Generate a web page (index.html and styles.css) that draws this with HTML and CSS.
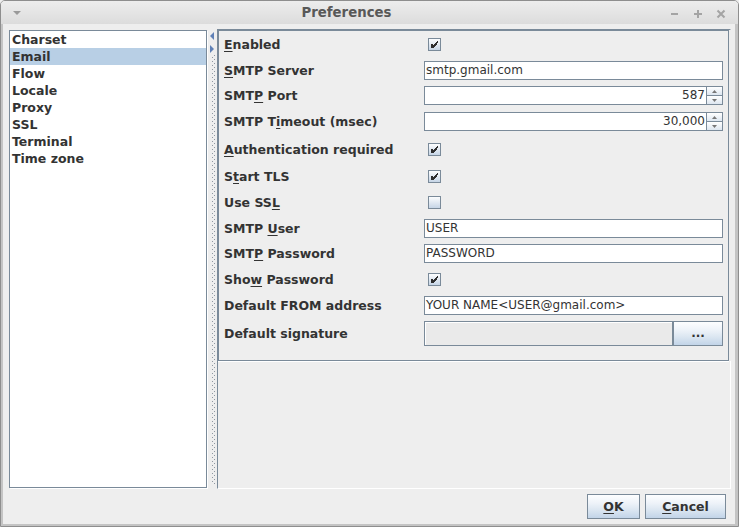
FILE: index.html
```html
<!DOCTYPE html>
<html>
<head>
<meta charset="utf-8">
<title>Preferences</title>
<link rel="stylesheet" href="styles.css">
</head>
<body>
<div class="window">
  <div class="titlebar">
    <div class="tb-left">
      <svg width="29" height="23" viewBox="0 0 29 23"><polygon points="12,10 20,10 16,14" fill="#9a9a9a"/></svg>
    </div>
    <div class="tb-title">Preferences</div>
    <div class="tb-right">
      <svg width="75" height="23" viewBox="0 0 75 23" shape-rendering="crispEdges">
        <rect x="8" y="12" width="7" height="2" fill="#a4a4a4"/>
        <rect x="31" y="12" width="8" height="2" fill="#a4a4a4"/>
        <rect x="34" y="9" width="2" height="8" fill="#a4a4a4"/>
        <path d="M54.5 9.5 L61.5 16.5 M61.5 9.5 L54.5 16.5" stroke="#a4a4a4" stroke-width="2" shape-rendering="auto"/>
      </svg>
    </div>
  </div>
  <div class="content">
    <div class="split">
      <ul class="list">
        <li>Charset</li>
        <li class="sel">Email</li>
        <li>Flow</li>
        <li>Locale</li>
        <li>Proxy</li>
        <li>SSL</li>
        <li>Terminal</li>
        <li>Time zone</li>
      </ul>
      <div class="divider">
        <svg width="10" height="460" viewBox="0 0 10 460" shape-rendering="crispEdges">
          <defs>
            <pattern id="bumps" x="1" y="0" width="4" height="4" patternUnits="userSpaceOnUse">
              <rect x="0" y="0" width="1" height="1" fill="#8f98a2"/>
              <rect x="2" y="2" width="1" height="1" fill="#8f98a2"/>
            </pattern>
          </defs>
          <rect x="5" y="26" width="3" height="430" fill="url(#bumps)"/>
          <polygon points="3,7 7,3 7,11" fill="#5f80b6" shape-rendering="auto"/>
          <polygon points="3,16 7,20 3,24" fill="#5f80b6" shape-rendering="auto"/>
        </svg>
      </div>
      <div class="rightpane">
        <div class="form">
          <div class="lbl"><u>E</u>nabled</div>
          <div class="cell"><span class="cb"><svg width="11" height="11" viewBox="0 0 11 11" shape-rendering="crispEdges"><g fill="#2e2e2e"><rect x="2" y="5" width="2" height="4"/><rect x="8" y="2" width="1" height="2"/><rect x="7" y="3" width="1" height="3"/><rect x="6" y="4" width="1" height="3"/><rect x="5" y="5" width="1" height="3"/><rect x="4" y="6" width="1" height="3"/></g></svg></span></div>

          <div class="lbl"><u>S</u>MTP Server</div>
          <div class="cell"><div class="tf">smtp.gmail.com</div></div>

          <div class="lbl">SMT<u>P</u> Port</div>
          <div class="cell">
            <div class="spin">
              <div class="tf num">587</div>
              <div class="spbtns">
                <div class="spbtn"><svg width="5" height="3" viewBox="0 0 5 3"><polygon points="2.5,0 5,3 0,3" fill="#777"/></svg></div>
                <div class="spbtn"><svg width="5" height="3" viewBox="0 0 5 3"><polygon points="0,0 5,0 2.5,3" fill="#777"/></svg></div>
              </div>
            </div>
          </div>

          <div class="lbl">SMTP T<u>i</u>meout (msec)</div>
          <div class="cell">
            <div class="spin">
              <div class="tf num">30,000</div>
              <div class="spbtns">
                <div class="spbtn"><svg width="5" height="3" viewBox="0 0 5 3"><polygon points="2.5,0 5,3 0,3" fill="#777"/></svg></div>
                <div class="spbtn"><svg width="5" height="3" viewBox="0 0 5 3"><polygon points="0,0 5,0 2.5,3" fill="#777"/></svg></div>
              </div>
            </div>
          </div>

          <div class="lbl"><u>A</u>uthentication required</div>
          <div class="cell"><span class="cb"><svg width="11" height="11" viewBox="0 0 11 11" shape-rendering="crispEdges"><g fill="#2e2e2e"><rect x="2" y="5" width="2" height="4"/><rect x="8" y="2" width="1" height="2"/><rect x="7" y="3" width="1" height="3"/><rect x="6" y="4" width="1" height="3"/><rect x="5" y="5" width="1" height="3"/><rect x="4" y="6" width="1" height="3"/></g></svg></span></div>

          <div class="lbl">S<u>t</u>art TLS</div>
          <div class="cell"><span class="cb"><svg width="11" height="11" viewBox="0 0 11 11" shape-rendering="crispEdges"><g fill="#2e2e2e"><rect x="2" y="5" width="2" height="4"/><rect x="8" y="2" width="1" height="2"/><rect x="7" y="3" width="1" height="3"/><rect x="6" y="4" width="1" height="3"/><rect x="5" y="5" width="1" height="3"/><rect x="4" y="6" width="1" height="3"/></g></svg></span></div>

          <div class="lbl">Use SS<u>L</u></div>
          <div class="cell"><span class="cb"></span></div>

          <div class="lbl">SMTP <u>U</u>ser</div>
          <div class="cell"><div class="tf">USER</div></div>

          <div class="lbl">SMT<u>P</u> Password</div>
          <div class="cell"><div class="tf">PASSWORD</div></div>

          <div class="lbl">Sho<u>w</u> Password</div>
          <div class="cell"><span class="cb"><svg width="11" height="11" viewBox="0 0 11 11" shape-rendering="crispEdges"><g fill="#2e2e2e"><rect x="2" y="5" width="2" height="4"/><rect x="8" y="2" width="1" height="2"/><rect x="7" y="3" width="1" height="3"/><rect x="6" y="4" width="1" height="3"/><rect x="5" y="5" width="1" height="3"/><rect x="4" y="6" width="1" height="3"/></g></svg></span></div>

          <div class="lbl">Default FROM address</div>
          <div class="cell"><div class="tf">YOUR NAME&lt;USER@gmail.com&gt;</div></div>

          <div class="lbl">Default signature</div>
          <div class="cell">
            <div class="sig">
              <div class="sigf"></div>
              <div class="btn dots">...</div>
            </div>
          </div>
        </div>
      </div>
    </div>
    <div class="buttons">
      <div class="btn ok"><u>O</u>K</div>
      <div class="btn cancel"><u>C</u>ancel</div>
    </div>
  </div>
</div>
</body>
</html>
```

FILE: styles.css
```css
* {
  box-sizing: border-box;
}

html, body {
  margin: 0;
  padding: 0;
}

body {
  width: 739px;
  height: 527px;
  overflow: hidden;
  background: #eeeeee;
  font-family: "DejaVu Sans", sans-serif;
  color: #333333;
}

.window {
  width: 739px;
  height: 527px;
  border: 1px solid #8e8e8e;
  border-radius: 5px 5px 0 0;
  background: #eeeeee;
  display: flex;
  flex-direction: column;
  overflow: hidden;
}

/* title bar */
.titlebar {
  height: 23px;
  flex: none;
  display: flex;
  align-items: center;
  background: linear-gradient(#ededed, #dcdcdc);
}

.tb-left {
  width: 29px;
  height: 23px;
  flex: none;
}

.tb-left svg,
.tb-right svg {
  display: block;
}

.tb-title {
  flex: 1;
  text-align: center;
  font-weight: bold;
  font-size: 13.3px;
  color: #585858;
  line-height: 23px;
}

.tb-right {
  width: 75px;
  height: 23px;
  flex: none;
}

/* content frame */
.content {
  flex: 1;
  border-left: 2px solid #c4c4c4;
  border-right: 3px solid #c4c4c4;
  border-bottom: 2px solid #c4c4c4;
  padding: 5px 0;
  display: flex;
  flex-direction: column;
}

.split {
  display: flex;
  height: 460px;
  margin: 0 4px 0 6px;
  flex: none;
}

.list {
  list-style: none;
  margin: 1px 0 0 0;
  padding: 0;
  width: 198px;
  height: 458px;
  border: 1px solid #7a8a99;
  background: #ffffff;
  box-shadow: 1px 1px 0 #ffffff;
}

.list li {
  height: 17px;
  line-height: 17px;
  padding-left: 2px;
  font-weight: bold;
  font-size: 12.5px;
  color: #333333;
  white-space: nowrap;
}

.list li.sel {
  background: #b8cfe5;
}

.divider {
  width: 10px;
  flex: none;
}

.divider svg {
  display: block;
}

.rightpane {
  width: 514px;
  height: 460px;
  border-left: 1px solid #7a8a99;
  border-top: 1px solid #7a8a99;
  border-right: 1px solid #ffffff;
  border-bottom: 1px solid #ffffff;
}

.form {
  width: 511px;
  height: 331px;
  border: 1px solid #7a8a99;
  box-shadow: 2px 0 0 #eeeeee, 0 1px 0 #ffffff;
  padding-left: 5px;
  display: grid;
  grid-template-columns: 200px 299px;
  grid-template-rows: 27px 25px 25px 27px 28px 26px 27px 25px 25px 27px 25px 30px;
  align-content: start;
  align-items: center;
}

.lbl {
  font-weight: bold;
  font-size: 12.5px;
  color: #333333;
  white-space: nowrap;
}

.lbl u,
.btn u {
  text-underline-offset: 2px;
}

.cell {
  display: flex;
  align-items: center;
}

.cb {
  display: block;
  width: 13px;
  height: 13px;
  margin-left: 4px;
  border: 1px solid #7a8a99;
  background: linear-gradient(#fcfdfe, #c6d5e6);
}

.cb svg {
  display: block;
}

.tf {
  width: 299px;
  height: 19px;
  border: 1px solid #7a8a99;
  background: #ffffff;
  font-size: 12px;
  line-height: 17px;
  padding-left: 1px;
  color: #333333;
  white-space: nowrap;
  overflow: hidden;
}

.spin {
  display: flex;
  width: 299px;
  height: 19px;
}

.spin .tf {
  width: 283px;
}

.tf.num {
  text-align: right;
  padding-right: 1px;
}

.spbtns {
  width: 16px;
  display: flex;
  flex-direction: column;
}

.spbtn {
  flex: 1;
  border: 1px solid #7a8a99;
  border-left: none;
  background: linear-gradient(#ffffff, #dde6f0);
  display: flex;
  align-items: center;
  justify-content: center;
}

.spbtn + .spbtn {
  border-top: none;
}

.spbtn svg {
  display: block;
}

.sig {
  display: flex;
  width: 299px;
  height: 25px;
}

.sigf {
  width: 249px;
  height: 25px;
  border: 1px solid #7a8a99;
  background: #eaeaea;
  box-shadow: inset 1px 1px 0 #ffffff;
}

.btn {
  height: 25px;
  border: 1px solid #7a8a99;
  background: linear-gradient(#fdfeff 0%, #eef3f9 35%, #dbe6f1 65%, #c2d4e8 100%);
  font-weight: bold;
  font-size: 12.5px;
  color: #333333;
  display: flex;
  align-items: center;
  justify-content: center;
}

.dots {
  width: 50px;
  font-size: 12px;
}

.buttons {
  display: flex;
  justify-content: flex-end;
  gap: 5px;
  margin-top: 5px;
  padding-right: 9px;
  height: 25px;
}

.ok {
  width: 53px;
}

.cancel {
  width: 81px;
}
```
